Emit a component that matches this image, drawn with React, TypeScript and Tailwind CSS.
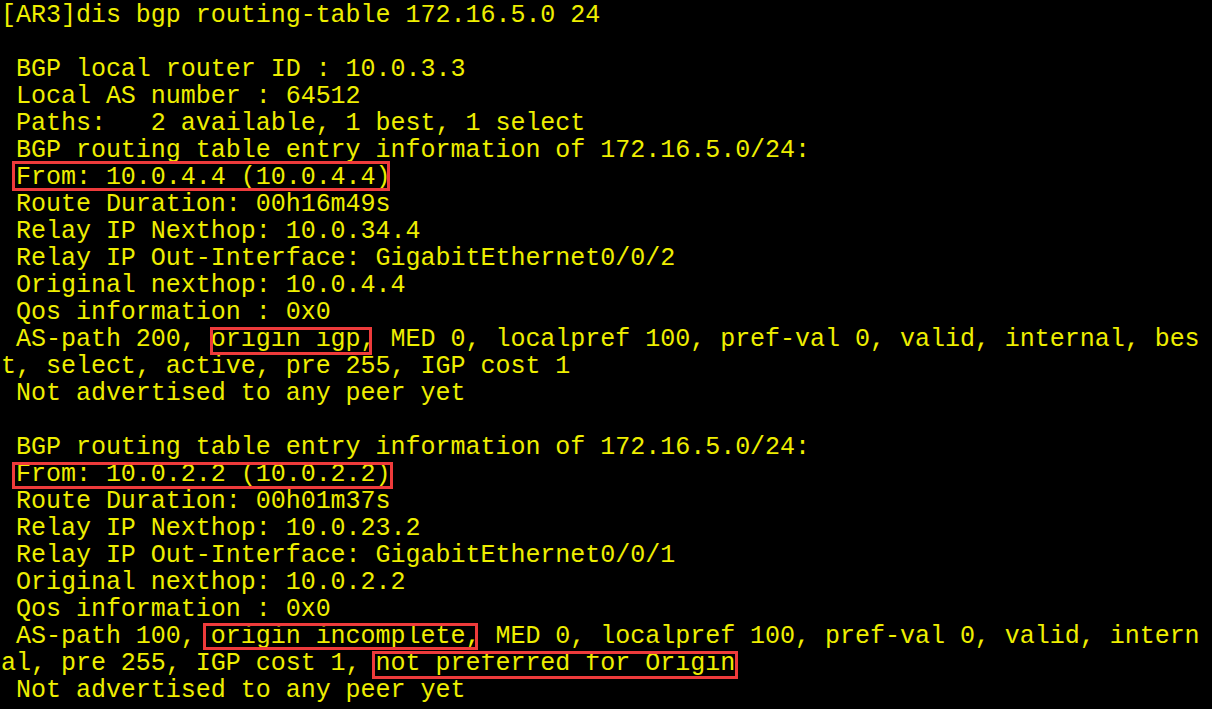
import React from 'react';

const lines = [
  '[AR3]dis bgp routing-table 172.16.5.0 24',
  '',
  ' BGP local router ID : 10.0.3.3',
  ' Local AS number : 64512',
  ' Paths:   2 available, 1 best, 1 select',
  ' BGP routing table entry information of 172.16.5.0/24:',
  ' From: 10.0.4.4 (10.0.4.4)',
  ' Route Duration: 00h16m49s',
  ' Relay IP Nexthop: 10.0.34.4',
  ' Relay IP Out-Interface: GigabitEthernet0/0/2',
  ' Original nexthop: 10.0.4.4',
  ' Qos information : 0x0',
  ' AS-path 200, origin igp, MED 0, localpref 100, pref-val 0, valid, internal, bes',
  't, select, active, pre 255, IGP cost 1',
  ' Not advertised to any peer yet',
  '',
  ' BGP routing table entry information of 172.16.5.0/24:',
  ' From: 10.0.2.2 (10.0.2.2)',
  ' Route Duration: 00h01m37s',
  ' Relay IP Nexthop: 10.0.23.2',
  ' Relay IP Out-Interface: GigabitEthernet0/0/1',
  ' Original nexthop: 10.0.2.2',
  ' Qos information : 0x0',
  ' AS-path 100, origin incomplete, MED 0, localpref 100, pref-val 0, valid, intern',
  'al, pre 255, IGP cost 1, not preferred for Origin',
  ' Not advertised to any peer yet',
];

// red annotation boxes drawn over the terminal text
const marks = [
  'left-[12px] top-[161px] w-[378px] h-[30px]',
  'left-[210px] top-[327px] w-[162px] h-[28px]',
  'left-[12px] top-[462px] w-[381px] h-[27px]',
  'left-[203px] top-[623px] w-[275px] h-[27px]',
  'left-[372px] top-[651px] w-[366px] h-[28px]',
];

export default function App() {
  return (
    <div className="relative w-[1212px] h-[709px] bg-black overflow-hidden">
      <pre className="m-0 pl-[1px] pt-[2px] font-['Courier_New','Nimbus_Mono_PS','FreeMono','Liberation_Mono',monospace] text-[25px] leading-[27px] tracking-[-0.02px] text-[#eeee00] whitespace-pre">
        {lines.join('\n')}
      </pre>
      {marks.map((m) => (
        <div key={m} className={`absolute border-[3px] border-[#ee3b3b] ${m}`} />
      ))}
    </div>
  );
}
